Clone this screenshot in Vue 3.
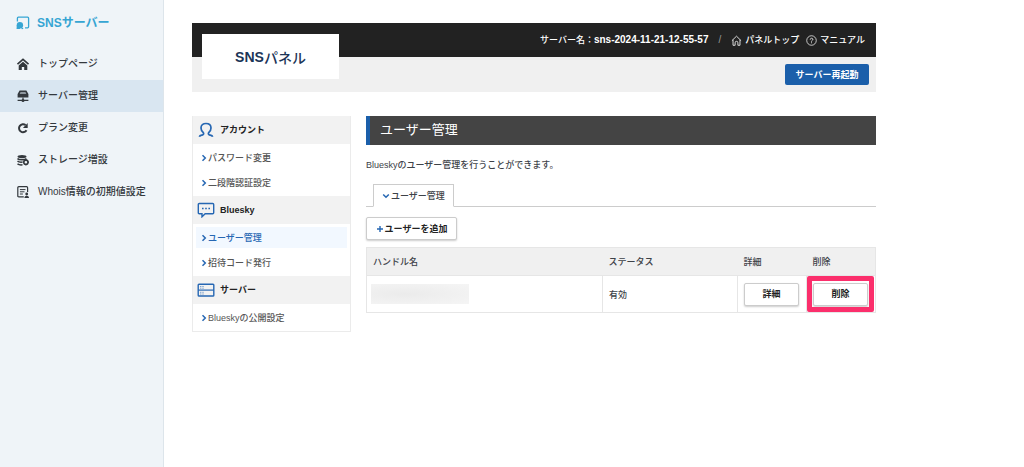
<script setup>
const nav = [
  { label: 'トップページ', icon: 'home' },
  { label: 'サーバー管理', icon: 'server', active: true },
  { label: 'プラン変更', icon: 'reload' },
  { label: 'ストレージ増設', icon: 'storage' },
  { label: 'Whois情報の初期値設定', icon: 'whois' },
]

const menu = [
  { title: 'アカウント', icon: 'person', items: [{ label: 'パスワード変更' }, { label: '二段階認証設定' }] },
  { title: 'Bluesky', icon: 'chat', items: [{ label: 'ユーザー管理', active: true }, { label: '招待コード発行' }] },
  { title: 'サーバー', icon: 'rack', items: [{ label: 'Blueskyの公開設定' }] },
]
</script>

<template>
  <div class="page">
    <aside class="sidebar">
      <h1 class="brand">
        <svg viewBox="0 0 14 14" aria-hidden="true">
          <path d="M1.400 5.500V2.200q0-1 1-1h9.200q1 0 1 1v8.600q0 1-1 1H9" fill="none" stroke="currentColor" stroke-width="1.300" />
          <circle cx="3.900" cy="9.200" r="3.200" fill="currentColor" />
          <path d="M.9 9L.5 13h4z" fill="currentColor" />
          <path d="M5.500 12.500h1.700" stroke="currentColor" stroke-width="1.200" />
        </svg>
        <span>SNSサーバー</span>
      </h1>
      <nav aria-label="サービス">
        <a v-for="n in nav" :key="n.label" href="#" class="nav-link" :class="{ active: n.active }">
          <svg viewBox="0 0 12 12" aria-hidden="true">
            <template v-if="n.icon === 'home'">
              <path d="M.5 6.200L6 1.300l5.500 4.900" fill="none" stroke="currentColor" stroke-width="1.600" />
              <path d="M1.700 7.600L6 3.800l4.300 3.800V12H7.200V8.900H4.800V12H1.700z" fill="currentColor" />
            </template>
            <template v-else-if="n.icon === 'server'">
              <path d="M2.600.5h6.800L11.400 4v3.600H.6V4z" fill="currentColor" />
              <path d="M3.500 1.900h5l.8 2H2.700z" fill="#d9e6f1" opacity=".55" />
              <path d="M6 7.500v3M.6 10.400h10.800" stroke="currentColor" stroke-width="1.200" />
              <circle cx="6" cy="10.400" r="1.500" fill="currentColor" />
            </template>
            <template v-else-if="n.icon === 'reload'">
              <path d="M9.500 8.200A4 4 0 1 1 8.600 3.100" fill="none" stroke="currentColor" stroke-width="2" />
              <path d="M10.700 1v4.900H5.900z" fill="currentColor" />
            </template>
            <template v-else-if="n.icon === 'storage'">
              <ellipse cx="5" cy="2.600" rx="4.500" ry="1.700" fill="currentColor" />
              <path d="M.5 4.600c1.500 1.500 7.500 1.500 9 0M.5 7.200c1.200.9 3.400 1.100 5 .9M.5 9.900c1.200.9 3.400 1.100 5 .9" fill="none" stroke="currentColor" stroke-width="1.500" />
              <circle cx="8.900" cy="8.200" r="2.100" fill="none" stroke="currentColor" stroke-width="1.600" />
              <path d="M8.900 5v1M8.900 10.400v1.200M5.800 8.200h1M11 8.200h1" stroke="currentColor" stroke-width="1.300" />
            </template>
            <template v-else>
              <path d="M6.800 10.900H1.800q-1 0-1-1V1.700q0-1 1-1h7.800q1 0 1 1V6" fill="none" stroke="currentColor" stroke-width="1.200" />
              <path d="M2.900 3.600h5.600M2.900 5.800h4.600M2.900 8h3" stroke="currentColor" stroke-width="1" />
              <circle cx="9.700" cy="8" r="1.400" fill="currentColor" />
              <path d="M7.400 12c0-3 4.600-3 4.600 0z" fill="currentColor" />
            </template>
          </svg>
          <span>{{ n.label }}</span>
        </a>
      </nav>
    </aside>

    <div class="content">
      <header class="header">
        <div class="topbar">
          <span class="server">サーバー名：<b>sns-2024-11-21-12-55-57</b></span>
          <span class="slash">/</span>
          <a href="#">
            <svg viewBox="0 0 12 12" aria-hidden="true">
              <path d="M1 6.200L6 1.300l5 4.900M2.200 5.200v6h2.300V8.400a1.500 1.500 0 0 1 3 0v2.800h2.300v-6" fill="none" stroke="currentColor" stroke-width=".9" />
            </svg>
            <span>パネルトップ</span>
          </a>
          <a href="#">
            <svg viewBox="0 0 12 12" aria-hidden="true">
              <circle cx="6" cy="6" r="5.200" fill="none" stroke="currentColor" stroke-width=".8" />
              <path d="M4.600 5c0-2 2.900-1.800 2.900-.2C7.500 5.900 6 5.800 6 7.200M6 8v1" fill="none" stroke="currentColor" stroke-width=".9" />
            </svg>
            <span>マニュアル</span>
          </a>
        </div>
        <div class="subbar"><button type="button" class="restart">サーバー再起動</button></div>
        <a href="#" class="logo"><b>SNS</b>パネル</a>
      </header>

      <div class="columns">
        <nav class="menu" aria-label="パネル">
          <section v-for="s in menu" :key="s.title">
            <h2>
              <svg viewBox="0 0 18 16" aria-hidden="true">
                <path v-if="s.icon === 'person'" d="M2.300 14.700c.4-1.200 1.500-1.300 2.800-1.600 1.700-.4 2-1.600 1-2.700C4.700 9 4 7.700 4 5.900 4 3.200 6.100 1.500 9 1.500s5 1.700 5 4.400c0 1.800-.7 3.100-2.100 4.500-1 1.100-.7 2.300 1 2.700 1.300.3 2.400.4 2.800 1.600" fill="none" stroke="currentColor" stroke-width="1.700" />
                <g v-else-if="s.icon === 'chat'">
                  <path d="M2.300 1.500h13.400q1 0 1 1v8.300q0 1-1 1H8.200L5 14.800v-3H2.300q-1 0-1-1V2.500q0-1 1-1z" fill="none" stroke="currentColor" stroke-width="1.400" />
                  <path d="M5 6.600h1.600M8.200 6.600h1.600M11.400 6.600h1.600" stroke="currentColor" stroke-width="1.500" />
                </g>
                <g v-else>
                  <rect x="1.200" y="2.200" width="15.600" height="11.800" rx=".8" fill="none" stroke="currentColor" stroke-width="1.400" />
                  <path d="M1.200 8.100h15.600" stroke="currentColor" stroke-width="1.200" />
                  <path d="M3.300 4.500h1M5.500 4.500h1M3.300 6.200h1M5.500 6.200h1M3.300 10.300h1M5.500 10.300h1M3.300 12h1M5.500 12h1" stroke="currentColor" stroke-width=".8" />
                </g>
              </svg>
              <span>{{ s.title }}</span>
            </h2>
            <ul>
              <li v-for="i in s.items" :key="i.label">
                <a href="#" :class="{ active: i.active }">
                  <svg viewBox="0 0 6 8" aria-hidden="true"><path d="M1.500 1.200L4.300 4 1.500 6.800" fill="none" stroke="currentColor" stroke-width="1.500" /></svg>
                  <span>{{ i.label }}</span>
                </a>
              </li>
            </ul>
          </section>
        </nav>

        <main>
          <h2 class="title">ユーザー管理</h2>
          <p class="lead">Blueskyのユーザー管理を行うことができます。</p>
          <div class="tabs">
            <a href="#" class="tab">
              <svg viewBox="0 0 8 6" aria-hidden="true"><path d="M1.200 1.500L4 4.300 6.800 1.500" fill="none" stroke="currentColor" stroke-width="1.500" /></svg>
              <span>ユーザー管理</span>
            </a>
          </div>
          <button type="button" class="btn add">
            <svg viewBox="0 0 8 8" aria-hidden="true"><path d="M4 1v6M1 4h6" stroke="currentColor" stroke-width="1.400" /></svg>
            <span>ユーザーを追加</span>
          </button>
          <table>
            <thead>
              <tr>
                <th class="c-handle">ハンドル名</th>
                <th class="c-status">ステータス</th>
                <th class="c-action">詳細</th>
                <th class="c-action">削除</th>
              </tr>
            </thead>
            <tbody>
              <tr>
                <td class="handle"><div class="masked"></div></td>
                <td>有効</td>
                <td><button type="button" class="btn small">詳細</button></td>
                <td class="marked"><button type="button" class="btn small">削除</button></td>
              </tr>
            </tbody>
          </table>
        </main>
      </div>
    </div>
  </div>
</template>

<style>
body {
  margin: 0;
  background: #fff;
}
</style>

<style scoped>
.page {
  display: flex;
  min-height: 100vh;
  font-family: "Liberation Sans", "Noto Sans CJK JP", sans-serif;
  font-size: 9px;
  font-weight: 500;
  color: #3d4248;
}
.page * {
  box-sizing: border-box;
}
svg {
  flex: none;
  display: block;
}
a {
  color: inherit;
  text-decoration: none;
}
button {
  font-family: inherit;
  cursor: pointer;
}
h1, h2, p, ul {
  margin: 0;
  padding: 0;
}
ul {
  list-style: none;
}

.sidebar {
  flex: none;
  width: 164px;
  background: #eff4f8;
  border-right: 1px solid #dde5eb;
}
.brand {
  display: flex;
  align-items: center;
  gap: 7px;
  height: 48px;
  padding: 0 16px 2px;
  font-size: 12px;
  line-height: 16px;
  color: #36a5d3;
}
.brand svg {
  width: 14px;
  height: 14px;
}
.nav-link {
  display: flex;
  align-items: center;
  gap: 9px;
  height: 32px;
  padding-left: 17px;
  font-size: 10px;
  line-height: 16px;
  white-space: nowrap;
  color: #33383d;
}
.nav-link.active {
  background: #d9e6f1;
}
.nav-link svg {
  width: 12px;
  height: 12px;
}

.content {
  flex: 1;
  min-width: 0;
  max-width: 740px;
  padding: 23px 28px;
}
.header {
  position: relative;
  margin-bottom: 24px;
}
.topbar {
  display: flex;
  align-items: center;
  justify-content: flex-end;
  gap: 7px;
  height: 34px;
  padding-right: 11px;
  background: #222;
  color: #fff;
  line-height: 16px;
}
.topbar b {
  font-size: 10px;
}
.topbar a {
  display: flex;
  align-items: center;
  gap: 3px;
}
.topbar svg {
  width: 11px;
  height: 11px;
}
.slash {
  margin: 0 3px;
  font-size: 10px;
  color: #999;
}
.subbar {
  display: flex;
  align-items: center;
  justify-content: flex-end;
  height: 35px;
  padding-right: 7px;
  background: #f0f0f0;
}
.restart {
  width: 84px;
  height: 21px;
  padding: 0;
  border: 0;
  border-radius: 2px;
  background: #1b5faa;
  color: #fff;
  font-size: 9px;
  font-weight: 700;
}
.logo {
  position: absolute;
  top: 11px;
  left: 10px;
  display: flex;
  align-items: center;
  justify-content: center;
  width: 137px;
  height: 45px;
  background: #fff;
  color: #1c3557;
  font-size: 14px;
}

.columns {
  display: flex;
  align-items: flex-start;
  gap: 15px;
}
.menu {
  flex: none;
  width: 159px;
  border: 1px solid #ebebeb;
  border-top: 0;
}
.menu h2 {
  display: flex;
  align-items: center;
  gap: 5px;
  height: 28px;
  padding-left: 4px;
  background: #f2f2f2;
  font-size: 9px;
  line-height: 16px;
  color: #222;
}
.menu h2 svg {
  width: 18px;
  height: 16px;
  color: #2667b3;
}
.menu ul {
  display: grid;
  gap: 4px;
  padding: 3px;
}
.menu li a {
  display: flex;
  align-items: center;
  gap: 1px;
  height: 21px;
  padding-left: 5px;
  line-height: 16px;
  color: #555;
}
.menu li a.active {
  background: #f2f8ff;
  color: #2667b3;
}
.menu li svg {
  width: 6px;
  height: 8px;
  color: #2667b3;
}

main {
  flex: 1;
  min-width: 0;
}
.title {
  height: 29px;
  padding-left: 10px;
  border-left: 4px solid #1b5faa;
  background: #444;
  color: #fff;
  font-size: 13px;
  font-weight: 400;
  line-height: 28px;
}
.lead {
  margin: 12px 0 11px;
  line-height: 16px;
}
.tabs {
  display: flex;
  height: 23px;
  padding-left: 7px;
  border-bottom: 1px solid #ccc;
}
.tab {
  display: flex;
  align-items: center;
  gap: 1px;
  width: 81px;
  height: 23px;
  padding-left: 8px;
  border: 1px solid #ccc;
  border-bottom-color: #fff;
  background: #fff;
}
.tab svg {
  width: 8px;
  height: 6px;
  color: #2667b3;
}
.btn {
  display: flex;
  align-items: center;
  justify-content: center;
  height: 23px;
  padding: 0;
  border: 1px solid #ccc;
  border-radius: 2px;
  background: #fff;
  box-shadow: 0 1px 2px rgba(0, 0, 0, 0.2);
  color: #222;
  font-size: 9px;
  font-weight: 700;
  line-height: 16px;
}
.btn svg {
  width: 8px;
  height: 8px;
  color: #2667b3;
}
.add {
  gap: 1px;
  width: 91px;
  margin: 10px 0 7px;
}
.small {
  width: 55px;
}
table {
  width: 100%;
  border-collapse: collapse;
  table-layout: fixed;
  border: 1px solid #e6e6e6;
}
th {
  height: 28px;
  padding: 0 6px;
  background: #f0f0f0;
  border-bottom: 1px solid #e6e6e6;
  font-weight: 500;
  text-align: left;
}
td {
  height: 37px;
  padding: 0 6px;
  border-left: 1px solid #e6e6e6;
}
.c-action {
  width: 69px;
}
.c-status {
  width: 135px;
}
.handle {
  padding-left: 4px;
}
.masked {
  width: 98px;
  height: 20px;
  background: radial-gradient(ellipse at 35% 50%, #ebebeb, #f5f5f5);
}
.marked {
  position: relative;
}
.marked::after {
  content: "";
  position: absolute;
  inset: 0 1px 0 0;
  border: 5px solid #fb2f6c;
  border-radius: 2px;
  pointer-events: none;
}
</style>
